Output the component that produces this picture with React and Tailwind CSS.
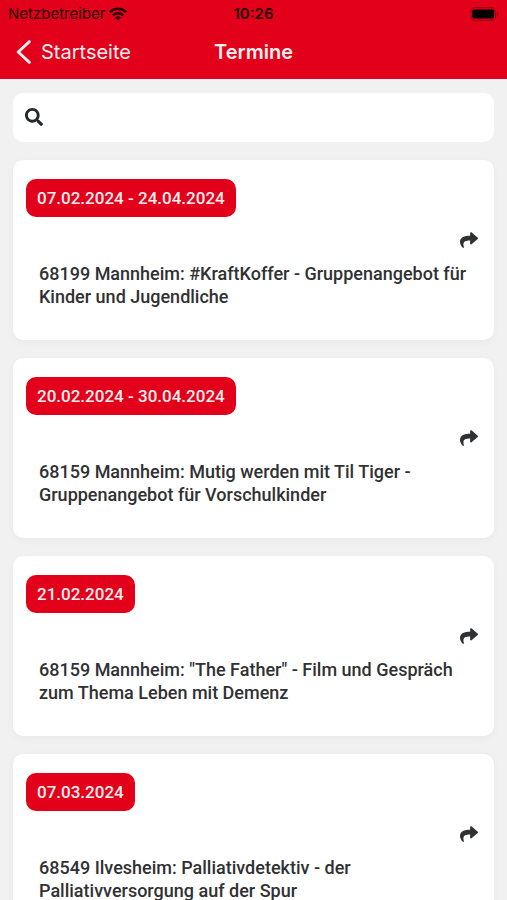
import { FaSearch, FaShare } from "react-icons/fa";

const events = [
  { date: "07.02.2024 - 24.04.2024", title: "68199 Mannheim: #KraftKoffer - Gruppenangebot für Kinder und Jugendliche" },
  { date: "20.02.2024 - 30.04.2024", title: "68159 Mannheim: Mutig werden mit Til Tiger - Gruppenangebot für Vorschulkinder" },
  { date: "21.02.2024", title: '68159 Mannheim: "The Father" - Film und Gespräch zum Thema Leben mit Demenz' },
  { date: "07.03.2024", title: "68549 Ilvesheim: Palliativdetektiv - der Palliativversorgung auf der Spur" },
];

function WifiIcon() {
  return (
    <svg viewBox="0 0 18 14" className="h-[14px] w-[18px]" fill="none" stroke="currentColor" strokeWidth="2.5" aria-hidden="true">
      <path d="M0.9 5.1a11.6 11.6 0 0 1 16.2 0" />
      <path d="M3.9 8.3a7.3 7.3 0 0 1 10.2 0" />
      <path d="M9 13.6 6.1 10.7a4.1 4.1 0 0 1 5.8 0Z" fill="currentColor" stroke="none" />
    </svg>
  );
}

function BatteryIcon() {
  return (
    <svg viewBox="0 0 29 14" className="h-[14px] w-[29px]" aria-hidden="true">
      <rect x="0.7" y="0.7" width="25" height="12.6" rx="3.8" fill="none" stroke="#a00012" strokeWidth="1.2" />
      <rect x="2.2" y="2.4" width="22" height="9.2" rx="2" fill="#000" />
      <path d="M27 4.8c1.9.7 1.9 3.7 0 4.4Z" fill="#a00012" />
    </svg>
  );
}

function StatusBar() {
  return (
    <div className="grid h-[27px] grid-cols-[1fr_auto_1fr] items-center px-[8px] text-[15px] leading-[20px] text-[#260004]">
      <div className="flex items-center gap-[4px]">
        <span>Netzbetreiber</span>
        <WifiIcon />
      </div>
      <span className="font-semibold">10:26</span>
      <div className="flex justify-end">
        <BatteryIcon />
      </div>
    </div>
  );
}

function NavBar() {
  return (
    <nav className="grid h-[52px] grid-cols-[1fr_auto_1fr] items-center px-[16px] pb-[2px] text-[20px] leading-[24px] text-[#fff0f0]">
      <a href="#startseite" className="flex items-center gap-[10px]">
        <svg viewBox="0 0 15 24" className="h-[24px] w-[15px]" fill="none" stroke="currentColor" strokeWidth="2.8" strokeLinecap="round" strokeLinejoin="round" aria-hidden="true">
          <path d="M13.4 1.6 2.2 12 13.4 22.4" />
        </svg>
        Startseite
      </a>
      <h1 className="font-semibold">Termine</h1>
    </nav>
  );
}

function EventCard({ date, title }) {
  return (
    <article className="rounded-[10px] bg-white px-[13px] pt-[19px] pb-[32px] shadow-[0_2px_8px_rgba(0,0,0,0.04)]">
      <time className="inline-block rounded-[10px] bg-[#e2001a] px-[11px] py-[7px] align-top text-[17px] leading-[24px] font-medium text-[#ffeeee]">
        {date}
      </time>
      <div className="flex h-[45px] items-center justify-end pr-[3px]">
        <button type="button" aria-label="Teilen" className="text-[18px]">
          <FaShare />
        </button>
      </div>
      <h2 className="pl-[13px] text-[18px] leading-[23px] font-medium">{title}</h2>
    </article>
  );
}

export default function App() {
  return (
    <div className="flex h-screen flex-col overflow-hidden bg-[#f1f1f1] font-['Roboto',sans-serif] text-[#303133]">
      <header className="shrink-0 bg-[#e2001a] font-['Inter',sans-serif]">
        <StatusBar />
        <NavBar />
      </header>
      <main className="flex min-h-0 flex-1 flex-col gap-[18px] overflow-y-auto px-[13px] pt-[14px] pb-[18px] [scrollbar-width:none]">
        <label className="flex h-[49px] shrink-0 items-center gap-[12px] rounded-[10px] bg-white px-[12px] pb-[2px]">
          <FaSearch className="h-[18px] w-[18px] text-[#25282b]" aria-hidden="true" />
          <input type="search" aria-label="Suche" className="min-w-0 flex-1 bg-transparent text-[18px] outline-none" />
        </label>
        {events.map((event) => (
          <EventCard key={event.date} {...event} />
        ))}
      </main>
    </div>
  );
}
